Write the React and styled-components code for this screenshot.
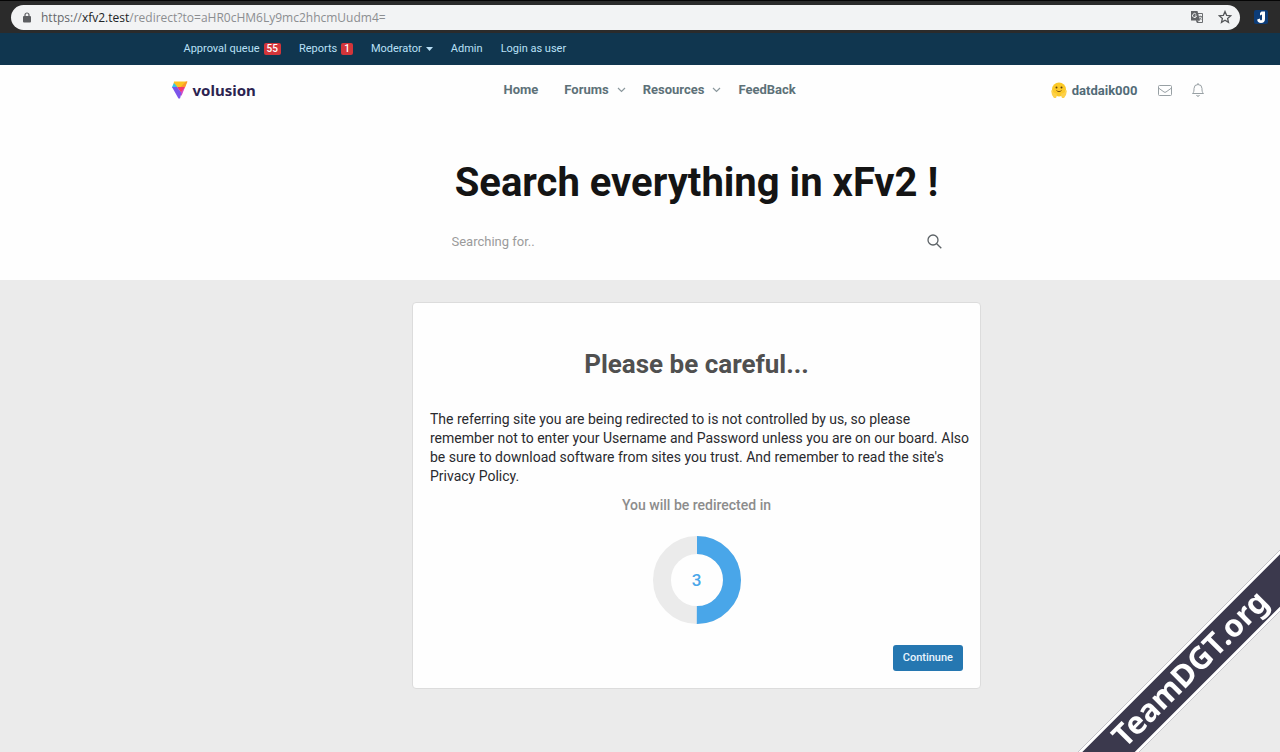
import React, { useState } from "react";
import styled, { createGlobalStyle, css } from "styled-components";

const navLinks = [
  { label: "Home" },
  { label: "Forums", menu: true },
  { label: "Resources", menu: true },
  { label: "FeedBack" },
];

export default function App() {
  const [keyword, setKeyword] = useState("");

  return (
    <>
      <GlobalStyle />
      <BrowserBar>
        <AddressBar>
          <LockIcon />
          <Address>
            https://<b>xfv2.test</b>
            <span>/redirect?to=aHR0cHM6Ly9mc2hhcmUudm4=</span>
          </Address>
          <IconButton aria-label="Translate this page">
            <TranslateIcon />
          </IconButton>
          <IconButton aria-label="Bookmark this page">
            <StarIcon />
          </IconButton>
        </AddressBar>
        <IconButton aria-label="Extension">
          <ExtensionIcon />
        </IconButton>
      </BrowserBar>

      <StaffBar>
        <StaffNav>
          <StaffLink href="#queue">
            Approval queue <Badge>55</Badge>
          </StaffLink>
          <StaffLink href="#reports">
            Reports <Badge>1</Badge>
          </StaffLink>
          <StaffLink href="#moderator">
            Moderator <Caret />
          </StaffLink>
          <StaffLink href="#admin">Admin</StaffLink>
          <StaffLink href="#login">Login as user</StaffLink>
        </StaffNav>
      </StaffBar>

      <Header>
        <HeaderRow>
          <Brand href="#home">
            <BrandIcon />
            volusion
          </Brand>
          <Nav>
            {navLinks.map((e) => (
              <NavLink href={"#" + e.label} key={e.label} $menu={e.menu}>
                {e.label}
                {e.menu && <ChevronIcon />}
              </NavLink>
            ))}
          </Nav>
          <Account>
            <UserLink href="#account">
              <AvatarIcon />
              datdaik000
            </UserLink>
            <IconButton aria-label="Inbox">
              <MailIcon />
            </IconButton>
            <IconButton aria-label="Alerts">
              <BellIcon />
            </IconButton>
          </Account>
        </HeaderRow>
        <MajorTitle>Search everything in xFv2 !</MajorTitle>
        <SearchForm onSubmit={(e) => e.preventDefault()}>
          <SearchInput
            aria-label="Search"
            placeholder="Searching for.."
            value={keyword}
            onChange={(e) => setKeyword(e.target.value)}
          />
          <IconButton aria-label="Search">
            <SearchIcon />
          </IconButton>
        </SearchForm>
      </Header>

      <Main>
        <Card>
          <CardTitle>Please be careful...</CardTitle>
          <Message>
            The referring site you are being redirected to is not controlled by
            us, so please remember not to enter your Username and Password
            unless you are on our board. Also be sure to download software from
            sites you trust. And remember to read the site's Privacy Policy.
          </Message>
          <RedirectLabel>You will be redirected in</RedirectLabel>
          <Countdown seconds={3} progress={0.5} />
          <ContinueButton>Continune</ContinueButton>
        </Card>
      </Main>

      <RibbonCorner>
        <Ribbon>
          <span>TeamDGT.org</span>
        </Ribbon>
      </RibbonCorner>
    </>
  );
}

function Countdown({ seconds, progress }) {
  const length = 2 * Math.PI * 35;
  return (
    <CountdownBox>
      <svg width="88" height="88" viewBox="0 0 88 88" fill="none">
        <circle cx="44" cy="44" r="35" stroke="#ebebeb" strokeWidth="18" />
        <circle
          cx="44"
          cy="44"
          r="35"
          stroke="#49a6e9"
          strokeWidth="18"
          strokeDasharray={`${length * progress} ${length}`}
          transform="rotate(-90 44 44)"
        />
      </svg>
      <Seconds>{seconds}</Seconds>
    </CountdownBox>
  );
}

const LockIcon = () => (
  <svg width="8" height="11" viewBox="0 0 8 11">
    <path d="M2 5V3a2 2 0 0 1 4 0v2" fill="none" stroke="#5c5e61" strokeWidth="1.2" />
    <rect y="4" width="8" height="6.5" rx="1" fill="#5c5e61" />
  </svg>
);

const TranslateIcon = () => (
  <svg width="14" height="14" viewBox="0 0 14 14" fill="none">
    <path d="M5.5 3.5h7v9H7z" fill="#f2f3f4" stroke="#6b6d70" />
    <path d="M1 1h6.5l2.5 9.5H1z" fill="#606265" />
    <path d="M6.2 4.4A2 2 0 1 0 6.5 6H4.8" stroke="#f2f3f4" />
    <path d="M8.5 6.5h3.5M10.2 5.5v1M11.5 6.5c-.3 1.5-1 2.5-2 3M9 7.5l2.5 2.5" stroke="#6b6d70" strokeWidth=".8" />
    <path d="M7 12.5l2.5-2h-3z" fill="#606265" />
  </svg>
);

const StarIcon = () => (
  <svg width="14" height="14" viewBox="0 0 14 14" fill="none">
    <path
      d="M7 1.5l1.6 3.8 4.1.4-3.1 2.7.9 4L7 10.3l-3.5 2.1.9-4-3.1-2.7 4.1-.4z"
      stroke="#55575a"
      strokeWidth="1.3"
    />
  </svg>
);

const ExtensionIcon = () => (
  <svg width="14" height="14" viewBox="0 0 14 14">
    <rect width="14" height="14" rx="2" fill="#0c3c78" />
    <path d="M7.5 1.5H11V9c0 2.5-1.5 4-4 4-2.3 0-3.8-1.2-3.8-3.5L6 8.5c0 1.3.3 1.8 1 1.8s1-.5 1-1.5V4.5l-2 1V3z" fill="#fff" />
  </svg>
);

const BrandIcon = () => (
  <svg width="16" height="18" viewBox="0 0 16 18">
    <path d="M2 .5h13L13 6H1z" fill="#fdc321" />
    <path d="M14 .5h1.5L13 6.5H8z" fill="#fb9a2b" />
    <path d="M0 6l2-4 3.5 4-2 4z" fill="#35c4e8" />
    <path d="M5 6h8l-3.5 6.5z" fill="#f4386b" />
    <path d="M13 6L9.5 15 8 12z" fill="#d94bc4" />
    <path d="M0 6h5l4.5 6L8 17.5H6.5z" fill="#7c54ea" />
  </svg>
);

const ChevronIcon = () => (
  <svg width="9" height="6" viewBox="0 0 9 6" fill="none">
    <path d="M1 1l3.5 3.5L8 1" stroke="#8b989d" strokeWidth="1.2" />
  </svg>
);

const Caret = () => (
  <svg width="7" height="4" viewBox="0 0 7 4">
    <path d="M0 0h7L3.5 4z" fill="#b9e0f7" />
  </svg>
);

const AvatarIcon = () => (
  <svg width="16" height="18" viewBox="0 0 16 18">
    <circle cx="8" cy="8.5" r="7" fill="#fbc928" />
    <circle cx="5.5" cy="6.5" r="1" fill="#5d4012" />
    <circle cx="10.5" cy="6.5" r="1" fill="#5d4012" />
    <path d="M5.5 9.5c1.5 1.5 3.5 1.5 5 0" fill="none" stroke="#7a4f12" />
    <path d="M0 9l3.5 3 2 .5.5 2L5 17H3l-2-3zM16 9l-3.5 3-2 .5-.5 2 1 2.5h2l2-3z" fill="#fdd04a" />
  </svg>
);

const MailIcon = () => (
  <svg width="14" height="11" viewBox="0 0 14 11" fill="none" stroke="#98a0a4">
    <rect x=".5" y=".5" width="13" height="10" rx="1" />
    <path d="M.5 3L6 7c.7.4 1.3.4 2 0l5.5-4" />
  </svg>
);

const BellIcon = () => (
  <svg width="12" height="14" viewBox="0 0 12 14" fill="none" stroke="#98a0a4">
    <path d="M6 0v1.5M.5 10.5C2 9.3 2 7.5 2 5.500a4 4 0 0 1 8 0c0 2 0 3.800 1.500 5zM4.700 12a1.300 1.300 0 0 0 2.600 0" />
  </svg>
);

const SearchIcon = () => (
  <svg width="15" height="15" viewBox="0 0 15 15" fill="none" stroke="#5c6266" strokeWidth="1.3">
    <circle cx="6" cy="6" r="5" />
    <path d="M9.7 9.7l4.6 4.6" />
  </svg>
);

const GlobalStyle = createGlobalStyle`
  * {
    box-sizing: border-box;
  }
  body {
    margin: 0;
    background: #ebebeb;
    font-family: Roboto, "Liberation Sans", sans-serif;
  }
  a {
    text-decoration: none;
  }
  svg {
    display: block;
    flex: none;
  }
`;

// the board is centred in the space right of the empty side column
const boardWidth = css`
  padding-left: 113px;
`;

const BrowserBar = styled.div`
  display: flex;
  align-items: center;
  gap: 14px;
  height: 33px;
  padding: 0 12px 0 11px;
  background: #2b2b2b;
  border-top: 1px solid #050505;
`;

const AddressBar = styled.div`
  display: flex;
  align-items: center;
  flex: 1;
  gap: 14px;
  height: 25px;
  padding: 0 8px 0 12px;
  border-radius: 13px;
  background: #f2f3f4;
`;

const Address = styled.span`
  flex: 1;
  margin-left: -4px;
  font-family: "Open Sans", "Noto Sans", sans-serif;
  font-size: 12px;
  color: #66686b;

  b {
    font-weight: 400;
    color: #222426;
  }
  span {
    color: #8c8e91;
  }
`;

const IconButton = styled.button`
  display: flex;
  padding: 0;
  border: 0;
  background: none;
  cursor: pointer;
`;

const StaffBar = styled.div`
  ${boardWidth}
  background: #10364f;
`;

const StaffNav = styled.nav`
  display: flex;
  align-items: center;
  gap: 18px;
  max-width: 1050px;
  height: 32px;
  margin: 0 auto;
  padding: 0 12px 1px;
`;

const StaffLink = styled.a`
  display: flex;
  align-items: center;
  gap: 4px;
  font-size: 11px;
  line-height: 16px;
  color: #b9e0f7;
`;

const Badge = styled.span`
  padding: 0 3px;
  border-radius: 2px;
  background: #d3353a;
  font-size: 10px;
  font-weight: 500;
  line-height: 12px;
  color: #fff;
`;

const Header = styled.header`
  ${boardWidth}
  padding-bottom: 26px;
  background: #fefefe;
`;

const HeaderRow = styled.div`
  display: grid;
  grid-template-columns: 332px 1fr auto;
  align-items: center;
  max-width: 1050px;
  height: 50px;
  margin: 0 auto;
  padding-right: 18px;
`;

const Brand = styled.a`
  display: flex;
  align-items: center;
  gap: 5px;
  font-family: "Noto Sans", sans-serif;
  font-size: 15px;
  font-weight: 700;
  line-height: 20px;
  color: #2b2350;
`;

const Nav = styled.nav`
  display: flex;
  align-items: center;
`;

const NavLink = styled.a`
  display: flex;
  align-items: center;
  gap: 8px;
  margin-right: ${(props) => (props.$menu ? "17px" : "26px")};
  font-size: 13px;
  font-weight: 700;
  line-height: 20px;
  color: #5d7178;
`;

const Account = styled.div`
  display: flex;
  align-items: center;
  gap: 20px;
`;

const UserLink = styled.a`
  display: flex;
  align-items: center;
  gap: 5px;
  font-size: 13px;
  font-weight: 700;
  color: #526b77;
`;

const MajorTitle = styled.h1`
  margin: 41px 0 0;
  font-size: 40px;
  font-weight: 700;
  line-height: 54px;
  text-align: center;
  color: #141414;
`;

const SearchForm = styled.form`
  display: flex;
  align-items: center;
  max-width: 490px;
  margin: 19px auto 0;
`;

const SearchInput = styled.input`
  flex: 1;
  min-width: 0;
  height: 25px;
  padding: 0;
  border: 0;
  outline: 0;
  background: none;
  font-family: inherit;
  font-size: 13px;
  color: #333;

  &::placeholder {
    color: #9b9b9b;
  }
`;

const Main = styled.main`
  ${boardWidth}
  padding-top: 22px;
`;

const Card = styled.section`
  display: flex;
  flex-direction: column;
  align-items: center;
  max-width: 569px;
  margin: 0 auto;
  padding: 42px 17px 17px;
  border: 1px solid #dcdcdc;
  border-radius: 4px;
  background: #fefefe;
`;

const CardTitle = styled.h2`
  margin: 0;
  font-size: 26px;
  font-weight: 700;
  line-height: 38px;
  color: #505050;
`;

const Message = styled.p`
  margin: 27px -8px 0 0;
  font-size: 14px;
  line-height: 19px;
  color: #2a2a2e;
`;

const RedirectLabel = styled.div`
  margin-top: 9px;
  font-size: 14px;
  font-weight: 500;
  line-height: 20px;
  color: #8c8c8c;
`;

const CountdownBox = styled.div`
  display: grid;
  place-items: center;
  margin-top: 21px;

  > * {
    grid-area: 1 / 1;
  }
`;

const Seconds = styled.span`
  font-size: 17px;
  font-weight: 500;
  color: #49a6e9;
`;

const ContinueButton = styled.button`
  align-self: flex-end;
  margin-top: 21px;
  padding: 0 10px;
  border: 0;
  border-radius: 3px;
  background: #2577b1;
  font-family: inherit;
  font-size: 11px;
  font-weight: 500;
  line-height: 26px;
  color: #e9f5fd;
  cursor: pointer;
`;

const RibbonCorner = styled.div`
  position: fixed;
  right: 0;
  bottom: 0;
  display: flex;
  align-items: center;
  justify-content: center;
  width: 178px;
  height: 166px;
  pointer-events: none;
`;

const Ribbon = styled.div`
  display: flex;
  flex: none;
  justify-content: center;
  width: 340px;
  padding-bottom: 4px;
  border: 3px solid #fff;
  background: #3b394d;
  font-family: "Noto Sans", sans-serif;
  font-size: 31px;
  font-weight: 700;
  line-height: 33px;
  color: #fff;
  transform: rotate(-45deg);
`;
